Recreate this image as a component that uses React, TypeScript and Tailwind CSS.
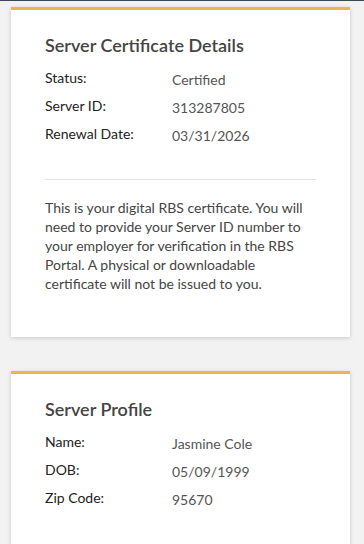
import React from 'react';

interface Field {
  label: string;
  value: string;
}

const certFields: Field[] = [
  { label: 'Status:', value: 'Certified' },
  { label: 'Server ID:', value: '313287805' },
  { label: 'Renewal Date:', value: '03/31/2026' },
];

const profileFields: Field[] = [
  { label: 'Name:', value: 'Jasmine Cole' },
  { label: 'DOB:', value: '05/09/1999' },
  { label: 'Zip Code:', value: '95670' },
];

const FieldRows: React.FC<{ fields: Field[] }> = ({ fields }) => (
  <div className="flex flex-col gap-[7px]">
    {fields.map((f) => (
      <div key={f.label} className="flex items-start h-[21px]">
        <span className="w-[127px] text-[14px] leading-[19px] text-[#222]">{f.label}</span>
        <span className="mt-[2px] text-[14px] leading-[19px] text-[#555]">{f.value}</span>
      </div>
    ))}
  </div>
);

const Card: React.FC<{ title: string; children: React.ReactNode; className?: string }> = ({ title, children, className }) => (
  <div className={`bg-white border-t-[3px] border-[#efb44b] shadow-[0_1px_4px_rgba(0,0,0,0.18)] pl-[34px] pr-[34px] pt-[23px] ${className ?? ''}`}>
    <h2 className="text-[18px] leading-[24px] font-semibold text-[#444] mb-[11px]">{title}</h2>
    {children}
  </div>
);

export default function App() {
  return (
    <div
      className="min-h-[544px] bg-[#f2f2f2] border-t border-[#3b4954] pt-[6px] pl-[11px] pr-[14px] overflow-hidden"
      style={{ fontFamily: '"Source Sans Pro", Lato, "Noto Sans", sans-serif' }}
    >
      <Card title="Server Certificate Details" className="h-[330px]">
        <FieldRows fields={certFields} />
        <div className="mt-[34px] border-t border-[#e2e2e2]" />
        <p className="mt-[18px] text-[14px] leading-[19px] text-[#444]">
          This is your digital RBS certificate. You will need to provide your Server ID number to your employer for verification in the RBS Portal. A physical or downloadable certificate will not be issued to you.
        </p>
      </Card>
      <Card title="Server Profile" className="mt-[34px] h-[200px]">
        <FieldRows fields={profileFields} />
      </Card>
    </div>
  );
}
